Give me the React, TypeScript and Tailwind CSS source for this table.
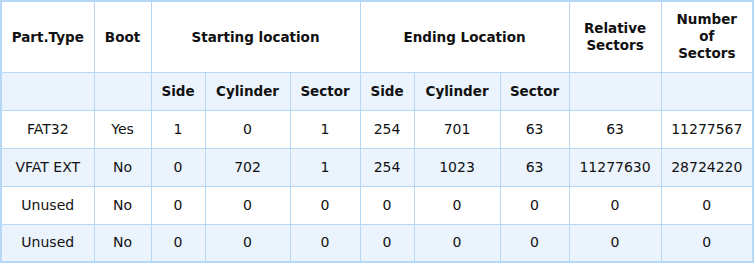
const widths = [93, 57, 54, 85, 70, 54, 86, 69, 92, 92]

const rows = [
  ["FAT32", "Yes", "1", "0", "1", "254", "701", "63", "63", "11277567"],
  ["VFAT EXT", "No", "0", "702", "1", "254", "1023", "63", "11277630", "28724220"],
  ["Unused", "No", "0", "0", "0", "0", "0", "0", "0", "0"],
  ["Unused", "No", "0", "0", "0", "0", "0", "0", "0", "0"],
]

const cell = "border border-[#b5d8f7] text-center align-middle p-0"

export default function App() {
  return (
    <div className="w-[754px] h-[263px] bg-white" style={{ fontFamily: '"DejaVu Sans", Verdana, sans-serif' }}>
      <table className="table-fixed border-collapse border-2 border-[#b5d8f7] w-[754px] text-[14px] text-[#111]">
        <colgroup>
          {widths.map((w, i) => (
            <col key={i} style={{ width: w }} />
          ))}
        </colgroup>
        <thead className="text-[13.5px]">
          <tr className="h-[71px] bg-white font-bold">
            <th className={cell}>Part.Type</th>
            <th className={cell}>Boot</th>
            <th className={cell} colSpan={3}>Starting location</th>
            <th className={cell} colSpan={3}>Ending Location</th>
            <th className={`${cell} leading-[17px]`}>Relative<br />Sectors</th>
            <th className={`${cell} leading-[17px]`}>Number<br />of<br />Sectors</th>
          </tr>
          <tr className="h-[38px] bg-[#ebf4fd] font-bold">
            <th className={cell}></th>
            <th className={cell}></th>
            <th className={cell}>Side</th>
            <th className={cell}>Cylinder</th>
            <th className={cell}>Sector</th>
            <th className={cell}>Side</th>
            <th className={cell}>Cylinder</th>
            <th className={cell}>Sector</th>
            <th className={cell}></th>
            <th className={cell}></th>
          </tr>
        </thead>
        <tbody>
          {rows.map((r, i) => (
            <tr key={i} className={`h-[38px] ${i % 2 === 0 ? "bg-white" : "bg-[#ebf4fd]"}`}>
              {r.map((v, j) => (
                <td key={j} className={cell}>{v}</td>
              ))}
            </tr>
          ))}
        </tbody>
      </table>
    </div>
  )
}
